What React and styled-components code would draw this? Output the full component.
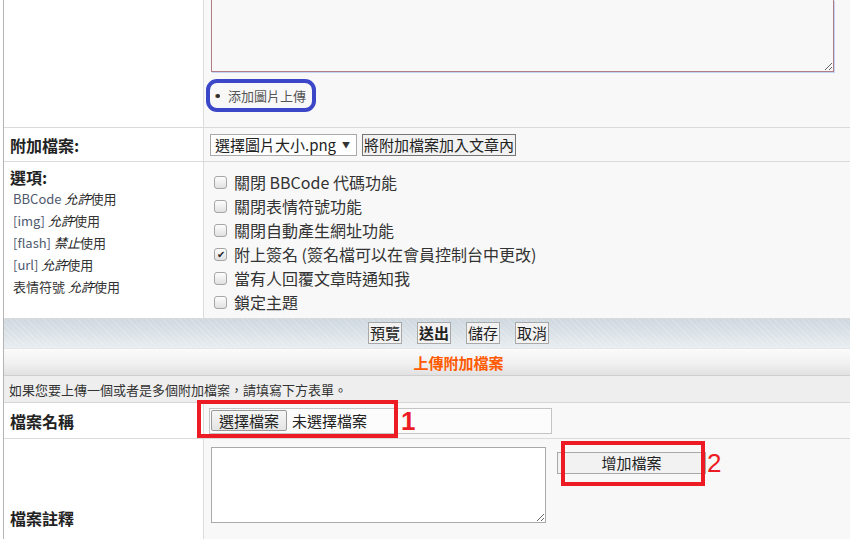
import React from "react";
import styled, { createGlobalStyle } from "styled-components";

const GlobalStyle = createGlobalStyle`
  html, body {
    margin: 0;
    padding: 0;
    background: #fff;
    overflow: hidden;
  }
  body {
    font-family: "Noto Sans CJK TC", "Noto Sans", sans-serif;
    color: #333;
  }
  * {
    box-sizing: border-box;
  }
`;

const Page = styled.div`
  padding-left: 3px;
`;

const Table = styled.div`
  width: 910px;
  border-left: 1px solid #b4b4b4;
`;

const Row = styled.div`
  position: relative;
  display: grid;
  grid-template-columns: 200px 1fr;
  height: ${(p) => p.$h}px;
  border-bottom: 1px solid #dadada;
`;

const LabelCell = styled.div`
  background: #fff;
  border-right: 1px solid #dcdcdc;
  padding-left: 6px;
  display: flex;
  align-items: ${(p) => (p.$top ? "flex-start" : "center")};
  flex-direction: ${(p) => (p.$top ? "column" : "row")};
  padding-top: ${(p) => (p.$top ? "4px" : "0")};
  font-size: 16px;
  font-weight: 700;
  color: #222;
`;

const FieldCell = styled.div`
  background: #f8f8f8;
  display: flex;
  flex-direction: ${(p) => (p.$column ? "column" : "row")};
  align-items: ${(p) => (p.$align || "center")};
  padding-left: ${(p) => p.$pl ?? 6}px;
  padding-top: ${(p) => p.$pt ?? 0}px;
`;

const MessageBox = styled.textarea`
  display: block;
  margin: 0;
  width: 623px;
  height: 72px;
  background: #f8f8f8;
  border: 1px solid #b07c86;
  border-top: none;
  box-shadow: 1px 1px 0 #c4d4f4;
  font-family: inherit;
`;

const ImageLink = styled.div`
  display: inline-flex;
  align-items: center;
  gap: 8px;
  margin: 7px 0 0 -5px;
  height: 33px;
  padding: 0 6px;
  border: 4px solid #3b46c8;
  border-radius: 11px;
  font-size: 13px;
  color: #555;
`;

const Bullet = styled.span`
  width: 4px;
  height: 4px;
  border-radius: 50%;
  background: #1f2a3a;
  box-shadow: -1px 0 0 #c77a2a;
`;

const SelectBox = styled.div`
  display: flex;
  align-items: center;
  justify-content: space-between;
  width: 147px;
  height: 22px;
  padding: 0 6px 0 4px;
  border: 1px solid #a9a9a9;
  background: #fff;
  font-size: 15px;
  color: #222;
`;

const Caret = styled.span`
  font-size: 8px;
  color: #333;
`;

const Button = styled.button`
  height: 22px;
  margin: ${(p) => p.$m || "0"};
  padding: 0 1px;
  width: ${(p) => (p.$w ? `${p.$w}px` : "auto")};
  border: 1px solid ${(p) => p.$border || "#a8a8a8"};
  background: #f2f2f2;
  font-family: inherit;
  font-size: 15px;
  font-weight: ${(p) => (p.$bold ? 700 : 400)};
  line-height: 20px;
  color: #222;
  border-radius: 0;
`;

const OptionTitle = styled.div`
  line-height: 22px;
`;

const RuleList = styled.div`
  padding-left: 3px;
  font-size: 13px;
  font-weight: 400;
  color: #333;
  line-height: 22px;
`;

const Tag = styled.span`
  color: #4f5a6e;
`;

const Em = styled.i`
  font-style: italic;
  color: #222;
`;

const CheckList = styled.div`
  padding: 8px 0 0 10px;
  font-size: 16px;
  line-height: 24px;
  color: #333;
`;

const CheckItem = styled.div`
  display: flex;
  align-items: center;
  gap: 7px;
`;

const Box = styled.span`
  display: inline-flex;
  align-items: center;
  justify-content: center;
  width: 13px;
  height: 13px;
  border: 1px solid #a6a6a6;
  border-radius: 3px;
  background: linear-gradient(#fdfdfd, #e0e0e0);
  font-size: 10px;
  line-height: 1;
  color: #222;
`;

const ButtonBar = styled.div`
  height: 30px;
  display: flex;
  align-items: center;
  justify-content: center;
  gap: 15px;
  padding-bottom: 1px;
  border-bottom: 1px solid #e6e6e6;
  background:
    repeating-linear-gradient(45deg, rgba(255, 255, 255, 0.18) 0 1px, transparent 1px 4px),
    linear-gradient(#ced8df, #e8edf0);
`;

const SectionHead = styled.div`
  height: 27px;
  display: flex;
  align-items: center;
  justify-content: center;
  border-bottom: 1px solid #cfcfcf;
  background: linear-gradient(#fbfbfb, #f1f1f1 55%, #e1e1e1);
  font-size: 15px;
  font-weight: 700;
  color: #ff5a00;
`;

const InfoBar = styled.div`
  height: 27px;
  display: flex;
  align-items: center;
  padding-left: 5px;
  background: #eee;
  border-bottom: 1px solid #d6d6d6;
  font-size: 13px;
  color: #333;
`;

const FileBox = styled.div`
  display: flex;
  align-items: center;
  width: 343px;
  height: 26px;
  padding-left: 1px;
  border: 1px solid #c4c4c4;
  background: #fcfcfc;
  font-size: 15px;
  color: #222;
`;

const FileButton = styled.span`
  height: 21px;
  display: inline-flex;
  align-items: center;
  padding: 0 7px;
  margin-right: 5px;
  border: 1px solid #999;
  border-radius: 2px;
  background: linear-gradient(#f6f6f6, #e4e4e4);
`;

const NoteBox = styled.textarea`
  display: block;
  margin: 0;
  width: 335px;
  height: 76px;
  border: 1px solid #a9a9a9;
  background: #fff;
  font-family: inherit;
`;

const RedMark = styled.div`
  position: absolute;
  left: ${(p) => p.$x}px;
  top: ${(p) => p.$y}px;
  width: ${(p) => p.$w}px;
  height: ${(p) => p.$h}px;
  border: 4px solid #ed1c24;
  pointer-events: none;
`;

const MarkNum = styled.span`
  position: absolute;
  left: ${(p) => p.$x}px;
  top: ${(p) => p.$y}px;
  font-family: "Liberation Sans", Arial, sans-serif;
  font-size: 26px;
  font-weight: ${(p) => (p.$bold ? 700 : 400)};
  line-height: 1;
  color: #ed1c24;
`;

const rules = [
  { tag: "BBCode", state: "允許" },
  { tag: "[img]", state: "允許" },
  { tag: "[flash]", state: "禁止" },
  { tag: "[url]", state: "允許" },
  { tag: "表情符號", state: "允許", plain: true },
];

const options = [
  { text: "關閉 BBCode 代碼功能" },
  { text: "關閉表情符號功能" },
  { text: "關閉自動產生網址功能" },
  { text: "附上簽名 (簽名檔可以在會員控制台中更改)", checked: true },
  { text: "當有人回覆文章時通知我" },
  { text: "鎖定主題" },
];

export default function App() {
  return (
    <>
      <GlobalStyle />
      <Page>
        <Table>
          <Row $h={128}>
            <LabelCell />
            <FieldCell $column $align="flex-start" $pl={7}>
              <MessageBox />
              <ImageLink>
                <Bullet />
                添加圖片上傳
              </ImageLink>
            </FieldCell>
          </Row>

          <Row $h={34}>
            <LabelCell>附加檔案:</LabelCell>
            <FieldCell>
              <SelectBox>
                選擇圖片大小.png <Caret>▼</Caret>
              </SelectBox>
              <Button $m="0 0 0 5px" $border="#767676">
                將附加檔案加入文章內
              </Button>
            </FieldCell>
          </Row>

          <Row $h={157}>
            <LabelCell $top>
              <OptionTitle>選項:</OptionTitle>
              <RuleList>
                {rules.map((r) => (
                  <div key={r.tag}>
                    {r.plain ? r.tag : <Tag>{r.tag}</Tag>} <Em>{r.state}</Em>使用
                  </div>
                ))}
              </RuleList>
            </LabelCell>
            <FieldCell $column $align="flex-start" $pl={0}>
              <CheckList>
                {options.map((o) => (
                  <CheckItem key={o.text}>
                    <Box>{o.checked ? "✔" : ""}</Box>
                    {o.text}
                  </CheckItem>
                ))}
              </CheckList>
            </FieldCell>
          </Row>

          <ButtonBar>
            <Button>預覽</Button>
            <Button $bold>送出</Button>
            <Button>儲存</Button>
            <Button>取消</Button>
          </ButtonBar>

          <SectionHead>上傳附加檔案</SectionHead>
          <InfoBar>如果您要上傳一個或者是多個附加檔案，請填寫下方表單。</InfoBar>

          <Row $h={36}>
            <LabelCell>檔案名稱</LabelCell>
            <FieldCell $pl={5}>
              <FileBox>
                <FileButton>選擇檔案</FileButton>
                未選擇檔案
              </FileBox>
            </FieldCell>
            <RedMark $x={193} $y={-3} $w={201} $h={38} />
            <MarkNum $x={397} $y={5} $bold>1</MarkNum>
          </Row>

          <Row $h={158}>
            <LabelCell>檔案註釋</LabelCell>
            <FieldCell $align="flex-start" $pl={7} $pt={8}>
              <NoteBox />
              <Button $m="5px 0 0 11px" $w={149}>
                增加檔案
              </Button>
            </FieldCell>
            <RedMark $x={557} $y={2} $w={144} $h={45} />
            <MarkNum $x={703} $y={11}>2</MarkNum>
          </Row>
        </Table>
      </Page>
    </>
  );
}
